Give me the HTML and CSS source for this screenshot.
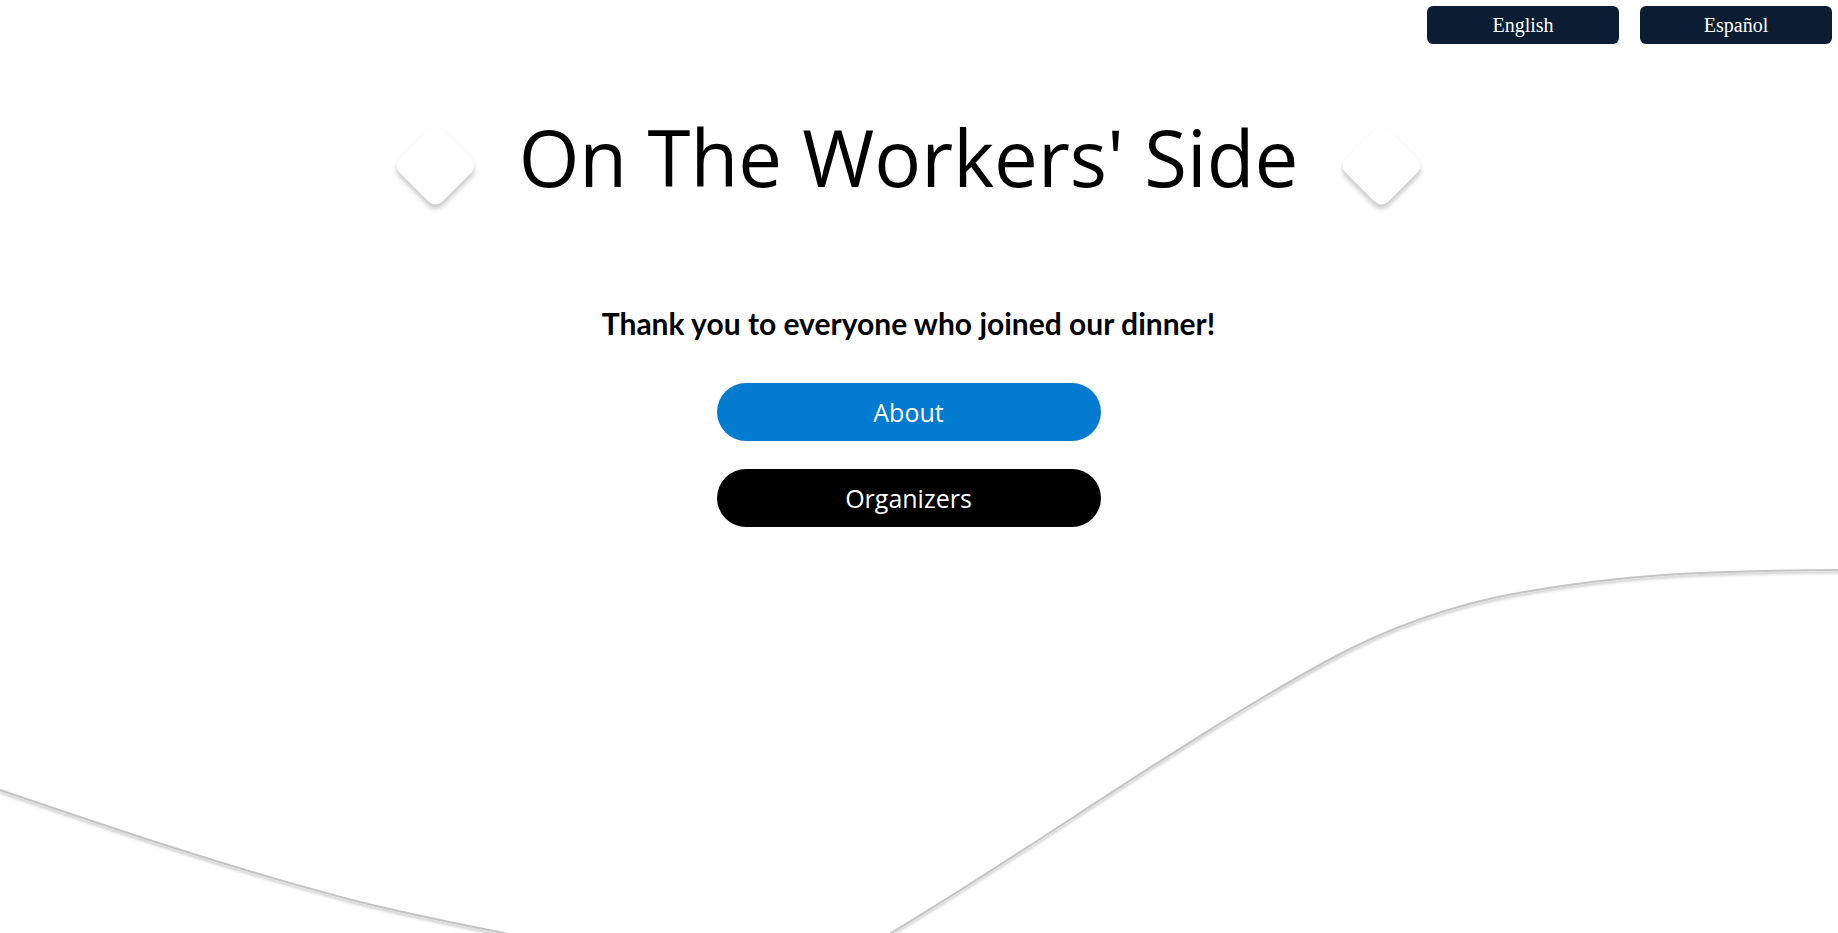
FILE: index.html
```html
<!DOCTYPE html>
<html lang="en">
<head>
<meta charset="utf-8">
<title>On The Workers' Side</title>
<link rel="stylesheet" href="styles.css">
</head>
<body>
<svg class="wave" viewBox="0 0 1838 933" preserveAspectRatio="none" aria-hidden="true">
  <defs>
    <filter id="sh" x="-5%" y="-5%" width="110%" height="120%">
      <feDropShadow dx="0" dy="2" stdDeviation="1.6" flood-color="#000" flood-opacity="0.28"/>
    </filter>
  </defs>
  <path filter="url(#sh)" fill="none" stroke="#c4c4c4" stroke-width="2"
    d="M0,790 C117,830 235,869.5 352,900 C403,913 453,923 504,933 C589.3,951.8 674.7,975 760,975 C803.7,975 847.3,959.2 891,933 C1035.7,846.2 1180.3,741.6 1325,662 C1391.3,625.5 1457.7,603.3 1524,592 C1582.7,582 1641.3,575.3 1700,573 C1746.7,571.1 1793.3,570 1840,570"/>
</svg>
<header class="topbar">
  <button class="lang">English</button>
  <button class="lang">Español</button>
</header>
<main class="content">
  <div class="hero">
    <span class="diamond"></span>
    <h1 class="title">On The Workers' Side</h1>
    <span class="diamond"></span>
  </div>
  <h2 class="subtitle">Thank you to everyone who joined our dinner!</h2>
  <nav class="actions">
    <a class="pill pill-blue" href="#">About</a>
    <a class="pill pill-black" href="#">Organizers</a>
  </nav>
</main>
</body>
</html>
```
FILE: styles.css
```css
html, body {
  margin: 0;
  padding: 0;
  background: #fff;
  height: 100%;
  overflow: hidden;
}

body {
  position: relative;
  font-family: "Open Sans", sans-serif;
  color: #000;
}

.wave {
  position: absolute;
  left: 0;
  top: 0;
  width: 100%;
  height: 933px;
  z-index: 0;
  pointer-events: none;
}

.topbar {
  position: relative;
  z-index: 1;
  display: flex;
  justify-content: flex-end;
  gap: 21px;
  padding: 6px 6px 0 0;
}

.lang {
  width: 192px;
  height: 38px;
  border: none;
  border-radius: 6px;
  background: #0b1d33;
  color: #fff;
  font-family: "Liberation Serif", "Times New Roman", serif;
  font-size: 20px;
  padding: 0;
  cursor: pointer;
}

.content {
  position: relative;
  z-index: 1;
  display: flex;
  flex-direction: column;
  align-items: center;
  padding-right: 21px;
}

.hero {
  display: flex;
  align-items: flex-start;
  justify-content: center;
  gap: 53px;
  margin-top: 60px;
}

.title {
  margin: 0;
  font-family: "Open Sans", sans-serif;
  font-weight: 400;
  font-size: 78px;
  line-height: normal;
  white-space: nowrap;
}

.diamond {
  display: block;
  width: 61px;
  height: 61px;
  margin-top: 31px;
  background: #fff;
  border-radius: 10px;
  transform: rotate(45deg);
  box-shadow: 3px 3px 5px rgba(0, 0, 0, 0.22);
}

.subtitle {
  margin: 95px 0 0;
  font-family: Lato, sans-serif;
  font-weight: 700;
  font-size: 30px;
  line-height: normal;
}

.actions {
  display: flex;
  flex-direction: column;
  gap: 28px;
  margin-top: 42px;
}

.pill {
  display: flex;
  align-items: center;
  justify-content: center;
  width: 384px;
  height: 58px;
  border-radius: 29px;
  color: #fff;
  text-decoration: none;
  font-family: "Open Sans", sans-serif;
  font-size: 25px;
}

.pill-blue {
  background: #037bd0;
}

.pill-black {
  background: #000;
}
```
